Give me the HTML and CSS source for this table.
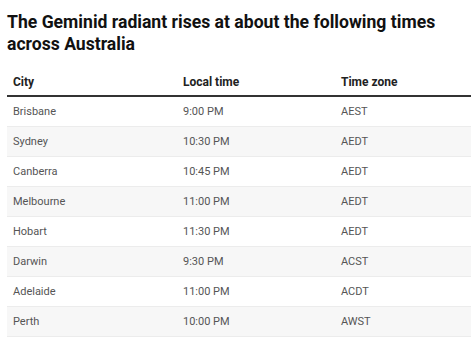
FILE: index.html
```html
<!DOCTYPE html>
<html>
<head>
<meta charset="utf-8">
<link rel="stylesheet" href="styles.css">
</head>
<body>
<div class="wrap">
  <h1 class="title">The Geminid radiant rises at about the following times across Australia</h1>
  <table class="tbl">
    <thead>
      <tr><th class="c1">City</th><th class="c2">Local time</th><th class="c3">Time zone</th></tr>
    </thead>
    <tbody>
      <tr><td>Brisbane</td><td>9:00 PM</td><td>AEST</td></tr>
      <tr><td>Sydney</td><td>10:30 PM</td><td>AEDT</td></tr>
      <tr><td>Canberra</td><td>10:45 PM</td><td>AEDT</td></tr>
      <tr><td>Melbourne</td><td>11:00 PM</td><td>AEDT</td></tr>
      <tr><td>Hobart</td><td>11:30 PM</td><td>AEDT</td></tr>
      <tr><td>Darwin</td><td>9:30 PM</td><td>ACST</td></tr>
      <tr><td>Adelaide</td><td>11:00 PM</td><td>ACDT</td></tr>
      <tr><td>Perth</td><td>10:00 PM</td><td>AWST</td></tr>
    </tbody>
  </table>
</div>
</body>
</html>
```
FILE: styles.css
```css
html, body {
  margin: 0;
  padding: 0;
  background: #fff;
}
.wrap {
  padding: 11px 0 0 7px;
  font-family: Roboto, "Liberation Sans", sans-serif;
}
.title {
  max-width: 445px;
  margin: 0 0 14px 0;
  font-size: 17.6px;
  line-height: 22px;
  font-weight: 700;
  color: #111;
}
.tbl {
  width: 470px;
  border-collapse: collapse;
  table-layout: fixed;
}
.tbl th {
  text-align: left;
  font-size: 12px;
  font-weight: 700;
  color: #222;
  padding: 0 6px;
  height: 26px;
  border-bottom: 2px solid #333;
}
.tbl th.c1 { width: 158px; }
.tbl th.c2 { width: 146px; }
.tbl td {
  font-size: 11px;
  color: #555;
  padding: 0 6px;
  height: 29px;
  border-bottom: 1px solid #ececec;
}
.tbl tbody tr:nth-child(even) td {
  background: #f7f7f7;
}
```
